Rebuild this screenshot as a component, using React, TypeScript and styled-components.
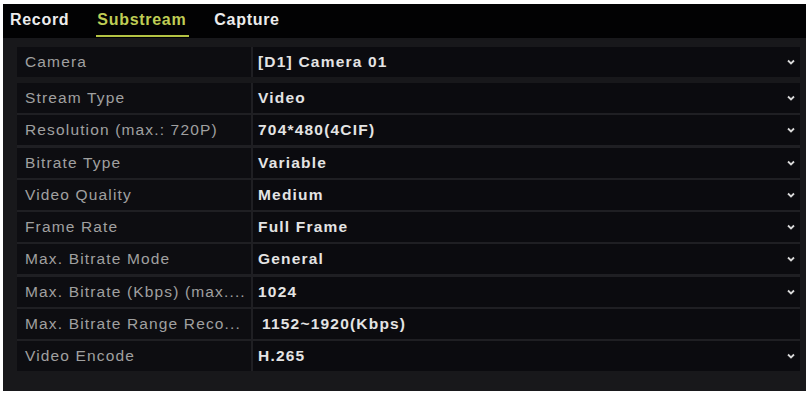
import styled, { createGlobalStyle } from 'styled-components';

const GlobalStyle = createGlobalStyle`
  html, body {
    margin: 0;
    padding: 0;
    background: #ffffff;
  }
  body {
    font-family: "Liberation Sans", Arial, sans-serif;
  }
`;

const Frame = styled.div`
  margin: 4px 6px 4px 3px;
  width: 803px;
  height: 387px;
  background: #18181b;
  display: flex;
  flex-direction: column;
  overflow: hidden;
`;

const TabBar = styled.div`
  height: 34px;
  background: #020203;
  display: flex;
  align-items: stretch;
  gap: 28px;
  padding-left: 7px;
`;

const Tab = styled.div<{ $active?: boolean }>`
  position: relative;
  display: flex;
  align-items: center;
  padding-bottom: 3px;
  font-size: 16px;
  font-weight: bold;
  letter-spacing: 0.7px;
  color: ${(p) => (p.$active ? '#bfcd55' : '#ececec')};

  &::after {
    content: '';
    display: ${(p) => (p.$active ? 'block' : 'none')};
    position: absolute;
    left: -1px;
    right: -3px;
    bottom: 1px;
    height: 2px;
    background: #b3c243;
  }
`;

const Body = styled.div`
  flex: 1;
  padding: 9px 6px 0 14px;
  display: flex;
  flex-direction: column;
  gap: 6px;
`;

const Table = styled.div`
  display: grid;
  grid-template-columns: 234px 1fr;
  grid-auto-rows: 30px;
  row-gap: 2.25px;
  column-gap: 2px;
  background: #1f1f23;
`;

const Label = styled.div`
  background: #0d0d11;
  display: flex;
  align-items: center;
  padding-left: 8px;
  font-size: 15.5px;
  letter-spacing: 1.15px;
  color: #a0a0a0;
  white-space: nowrap;
`;

const Value = styled.div<{ $inset?: number }>`
  background: #0b0b0f;
  display: flex;
  align-items: center;
  justify-content: space-between;
  padding-left: ${(p) => p.$inset ?? 5}px;
  padding-right: 5px;
  font-size: 15.5px;
  font-weight: bold;
  letter-spacing: 1.2px;
  color: #e4e4e4;
  white-space: nowrap;
`;

const Arrow = () => (
  <svg width="8" height="6" viewBox="0 0 8 6">
    <path d="M1 1.5 L4 4.5 L7 1.5" fill="none" stroke="#d8d8d8" strokeWidth="1.8" />
  </svg>
);

type Row = { label: string; value: string; arrow?: boolean; inset?: number };

const rows: Row[] = [
  { label: 'Stream Type', value: 'Video', arrow: true },
  { label: 'Resolution (max.: 720P)', value: '704*480(4CIF)', arrow: true },
  { label: 'Bitrate Type', value: 'Variable', arrow: true },
  { label: 'Video Quality', value: 'Medium', arrow: true },
  { label: 'Frame Rate', value: 'Full Frame', arrow: true },
  { label: 'Max. Bitrate Mode', value: 'General', arrow: true },
  { label: 'Max. Bitrate (Kbps) (max....', value: '1024', arrow: true },
  { label: 'Max. Bitrate Range Reco...', value: '1152~1920(Kbps)', inset: 9 },
  { label: 'Video Encode', value: 'H.265', arrow: true },
];

export default function App() {
  return (
    <>
      <GlobalStyle />
      <Frame>
        <TabBar>
          <Tab>Record</Tab>
          <Tab $active>Substream</Tab>
          <Tab>Capture</Tab>
        </TabBar>
        <Body>
          <Table>
            <Label>Camera</Label>
            <Value>
              [D1] Camera 01
              <Arrow />
            </Value>
          </Table>
          <Table>
            {rows.map((r) => (
              <>
                <Label key={r.label + '-l'}>{r.label}</Label>
                <Value key={r.label + '-v'} $inset={r.inset}>
                  {r.value}
                  {r.arrow && <Arrow />}
                </Value>
              </>
            ))}
          </Table>
        </Body>
      </Frame>
    </>
  );
}
